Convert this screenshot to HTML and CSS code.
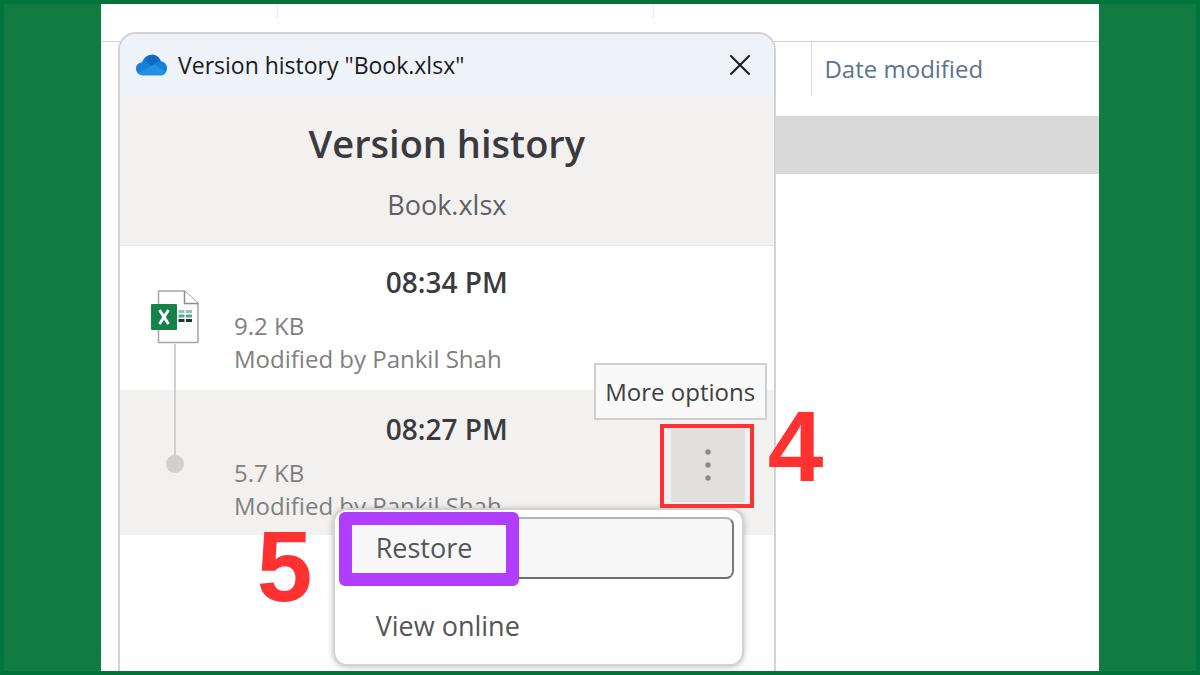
FILE: index.html
```html
<!DOCTYPE html>
<html lang="en">
<head>
  <meta charset="UTF-8">
  <meta name="viewport" content="width=device-width, initial-scale=1.0">
  <title>Version history</title>
  <link rel="stylesheet" href="styles.css">
</head>
<body>
  <main class="frame">
    <!-- File list behind the dialog -->
    <div class="explorer">
      <div class="toolbar">
        <span class="divider"></span>
        <span class="divider"></span>
      </div>
      <table class="files">
        <thead>
          <tr>
            <th class="name-col"></th>
            <th><span class="column-label">Date modified</span></th>
          </tr>
        </thead>
        <tbody>
          <tr class="selected">
            <td></td>
            <td></td>
          </tr>
        </tbody>
      </table>
    </div>

    <!-- Version history dialog -->
    <section class="dialog">
      <div class="titlebar">
        <svg class="cloud" viewBox="0 0 30 21" aria-hidden="true">
          <path d="M7 20.500C3 20.500 0 17.800 0 14.200c0-3.300 2.500-6 5.800-6.300C7.300 3.500 11 .5 15.300.5c4.100 0 7.500 2.600 8.700 6.400 3.400.3 6 3.200 6 6.700 0 3.900-2.800 6.900-6.600 6.900z" fill="#1482dc"/>
          <path d="M8 6c1.600-3.300 4.300-5.500 7.300-5.500 4.100 0 7.500 2.600 8.700 6.400-2.200 0-4 .8-5.600 2.200L15 11 11.500 8c-1-1-2-1.800-3.500-2z" fill="#1269c2"/>
          <path d="M2 18.300 18.400 10.100 29 17.500c-1.200 1.900-3.200 3-5.600 3H7c-2 0-3.800-.8-5-2.200z" fill="#2590e6"/>
        </svg>
        <span class="titlebar-text">Version history "Book.xlsx"</span>
        <button class="close" aria-label="Close">
          <svg viewBox="0 0 20 20" aria-hidden="true">
            <path d="M1 1l18 18M19 1L1 19" fill="none" stroke="#1b1b1b" stroke-width="2" stroke-linecap="round"/>
          </svg>
        </button>
      </div>

      <header class="heading">
        <h1>Version history</h1>
        <p>Book.xlsx</p>
      </header>

      <ul class="versions">
        <li class="version">
          <div class="marker">
            <svg class="file-icon" viewBox="0 0 48 54" aria-hidden="true">
              <path d="M7.500 1h26L47 13.500V52.500H7.500z" fill="#fdfdfd" stroke="#a6a6a6" stroke-width="1.500"/>
              <path d="M33.500 1v12.500H47" fill="#fff" stroke="#8f8f8f" stroke-width="1.500"/>
              <path d="M27.500 21.500h6M35 21.500h6" stroke="#8fc4b8" stroke-width="3"/>
              <path d="M27.500 26h6M35 26h6" stroke="#5aa391" stroke-width="3"/>
              <path d="M27.500 30.500h6M35 30.500h6" stroke="#16382c" stroke-width="3"/>
              <rect x="0" y="14" width="26" height="26" rx="1" fill="#16824a"/>
              <path d="M8.500 20l9 14M17.500 20l-9 14" stroke="#fff" stroke-width="3"/>
            </svg>
          </div>
          <time class="version-time">08:34 PM</time>
          <div class="details">
            <p>9.2 KB</p>
            <p>Modified by Pankil Shah</p>
          </div>
        </li>
        <li class="version active">
          <div class="marker"><span class="dot"></span></div>
          <time class="version-time">08:27 PM</time>
          <div class="details">
            <p>5.7 KB</p>
            <p>Modified by Pankil Shah</p>
          </div>
          <div class="options">
            <button class="more" aria-label="More options">
              <svg viewBox="0 0 6 32" aria-hidden="true">
                <circle cx="3" cy="3" r="2.700"/>
                <circle cx="3" cy="16" r="2.700"/>
                <circle cx="3" cy="29" r="2.700"/>
              </svg>
            </button>
            <span class="tooltip" role="tooltip">More options</span>
            <div class="menu">
              <button class="menu-item focused">Restore</button>
              <button class="menu-item">View online</button>
              <span class="highlight"></span>
              <span class="step step-five">5</span>
            </div>
            <span class="red-box"></span>
            <span class="step step-four">4</span>
          </div>
        </li>
      </ul>
    </section>
  </main>
</body>
</html>
```

FILE: styles.css
```css
* {
  box-sizing: border-box;
}
body {
  margin: 0;
  font-family: "Open Sans", "Noto Sans", sans-serif;
  font-size: 24px;
  color: #404040;
}
h1, p, ul {
  margin: 0;
  padding: 0;
}
button {
  font: inherit;
  color: inherit;
  border: none;
  padding: 0;
  cursor: pointer;
}
.frame {
  display: grid;
  min-height: 100vh;
  padding: 0 97px;
  border: 4px solid #00743b;
  background: #117c42;
  overflow: hidden;
}

/* File list */
.explorer {
  grid-area: 1 / 1;
  background: #fff;
}
.toolbar {
  display: flex;
  height: 38px;
  border-bottom: 1px solid #d2d2d2;
}
.divider {
  width: 376px;
  height: 14px;
  border-right: 1px solid #ebebeb;
}
.divider:first-child {
  width: 177px;
}
.files {
  width: calc(100% - 20px);
  margin-left: 20px;
  border-collapse: collapse;
}
.files th {
  height: 74px;
  padding: 0;
  text-align: left;
  vertical-align: top;
  font-weight: normal;
}
.files .name-col {
  width: 70.6%;
}
.column-label {
  display: block;
  padding-left: 12px;
  border-left: 1px solid #dcdcdc;
  line-height: 54px;
  color: #5b7490;
}
.selected td {
  height: 58px;
  padding: 0;
  background: #d9d9d9;
}

/* Dialog */
.dialog {
  grid-area: 1 / 1;
  width: 65.9%;
  margin: 28px 0 0 17px;
  border: 2px solid #d2d2d4;
  border-bottom: none;
  border-radius: 18px 18px 0 0;
  background: #fff;
}
.titlebar {
  display: flex;
  align-items: center;
  height: 62px;
  padding: 0 24px 0 16px;
  border-radius: 16px 16px 0 0;
  background: #eef3f9;
  font-size: 23px;
  line-height: 32px;
  color: #1b1b1b;
}
.cloud {
  width: 31px;
  height: 22px;
  margin-right: 11px;
}
.titlebar-text {
  flex: 1;
}
.close {
  width: 20px;
  height: 20px;
  background: none;
}
.close svg {
  display: block;
}
.heading {
  height: 150px;
  padding-top: 22px;
  border-bottom: 1px solid #e9e8e7;
  background: #f2f1f0;
  text-align: center;
}
.heading h1 {
  font-size: 38px;
  font-weight: 600;
  line-height: 50px;
  color: #3b3b3f;
}
.heading p {
  margin-top: 20px;
  font-size: 27px;
  line-height: 34px;
  color: #606064;
}

/* Version rows */
.versions {
  list-style: none;
}
.version {
  display: grid;
  grid-template-columns: 109px 1fr 103px;
  grid-template-rows: 34px 66px;
  row-gap: 11px;
  padding: 18px 0 15px;
}
.version.active {
  padding: 21px 0 13px;
  background: #f2f1f0;
}
.marker {
  grid-area: 1 / 1 / 3 / 2;
  display: flex;
  align-items: center;
  justify-content: center;
  position: relative;
  margin-bottom: 5px;
}
.file-icon {
  width: 48px;
  height: 54px;
}
.marker::after {
  content: "";
  position: absolute;
  top: 80px;
  left: 54px;
  width: 2px;
  height: 115px;
  background: #d0d0d0;
}
.active .marker::after {
  display: none;
}
.dot {
  width: 18px;
  height: 18px;
  border-radius: 50%;
  background: #d0d0d0;
}
.version-time {
  grid-area: 1 / 1 / 2 / 4;
  text-align: center;
  font-size: 28px;
  font-weight: 600;
  line-height: 36px;
  color: #3b3b3f;
}
.details {
  grid-area: 2 / 2;
  padding-left: 5px;
  line-height: 33px;
  color: #808080;
}

/* More options button with its tooltip and menu */
.options {
  grid-area: 1 / 3 / 3 / 4;
  align-self: center;
  position: relative;
  width: 74px;
  height: 74px;
  margin-bottom: 4px;
}
.more {
  display: flex;
  align-items: center;
  justify-content: center;
  width: 100%;
  height: 100%;
  background: #e1e0df;
}
.more svg {
  width: 6px;
  height: 32px;
  fill: #8a8a8a;
}
.tooltip {
  position: absolute;
  right: -22px;
  bottom: 82px;
  width: 173px;
  border: 2px solid #cfcfcf;
  background: #f9f9f9;
  line-height: 53px;
  text-align: center;
  white-space: nowrap;
}
.menu {
  position: absolute;
  top: 80px;
  right: 1px;
  width: 411px;
  padding: 7px 8px;
  border: 2px solid #d2d2d2;
  border-radius: 14px;
  background: #fff;
  box-shadow: 0 1px 6px rgba(0, 0, 0, 0.25);
}
.menu-item {
  display: block;
  width: 100%;
  height: 62px;
  padding-left: 31px;
  border: 2px solid transparent;
  border-radius: 8px;
  background: none;
  font-size: 27px;
  line-height: 34px;
  text-align: left;
  color: #555;
}
.menu-item + .menu-item {
  margin-top: 16px;
}
.menu-item.focused {
  border-color: #b4b4b4 #7a7a7a #6e6e6e;
  background: #f7f7f7;
}

/* Step annotations */
.highlight {
  position: absolute;
  top: 2px;
  left: 4px;
  width: 180px;
  height: 74px;
  border: 13px solid #b13dff;
  border-radius: 6px;
}
.red-box {
  position: absolute;
  inset: -4px -9px -6px -11px;
  border: 4px solid #ff3131;
}
.step {
  position: absolute;
  font-family: "Liberation Sans", Arial, sans-serif;
  font-size: 100px;
  font-weight: bold;
  line-height: 72px;
  color: #ff3131;
}
.step-four {
  top: -18px;
  left: 97px;
}
.step-five {
  top: 20px;
  left: -78px;
}
```
